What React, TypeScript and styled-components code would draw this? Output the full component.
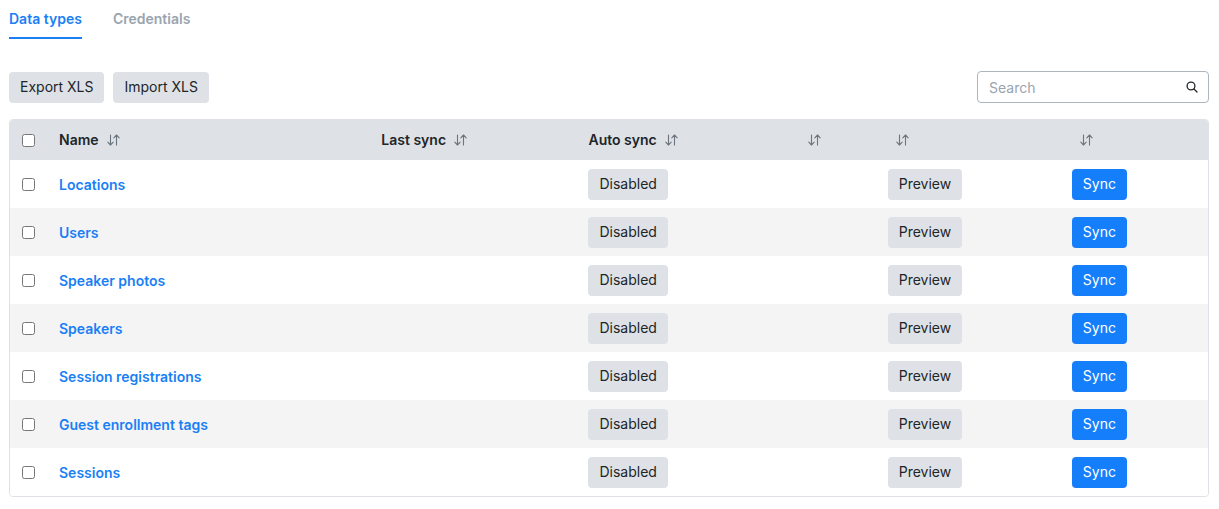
import React from "react";
import styled, { createGlobalStyle } from "styled-components";

const GlobalStyle = createGlobalStyle`
  body {
    margin: 0;
    background: #ffffff;
    font-family: Inter, "Liberation Sans", sans-serif;
    color: #212529;
  }
`;

const Page = styled.div`
  padding: 0 10px 0 9px;
`;

const Tabs = styled.nav`
  display: flex;
  gap: 31px;
  height: 39px;
`;

const Tab = styled.a<{ $active?: boolean }>`
  display: flex;
  align-items: center;
  height: 37px;
  font-size: 14px;
  font-weight: 600;
  color: ${(p) => (p.$active ? "#1a7ff5" : "#9aa4af")};
  border-bottom: 2px solid ${(p) => (p.$active ? "#1a7ff5" : "transparent")};
  cursor: pointer;
`;

const Toolbar = styled.div`
  display: flex;
  align-items: center;
  justify-content: space-between;
  height: 32px;
  margin-top: 32px;
  margin-bottom: 16px;
`;

const ButtonGroup = styled.div`
  display: flex;
  gap: 9px;
`;

const Btn = styled.button<{ $variant?: "light" | "primary" }>`
  font-family: inherit;
  font-size: 14px;
  line-height: 20px;
  padding: 5px 11px 6px;
  border: 0;
  border-radius: 4px;
  background: ${(p) => (p.$variant === "primary" ? "#157ffb" : "#dee2e6")};
  color: ${(p) => (p.$variant === "primary" ? "#ffffff" : "#212529")};
  cursor: pointer;
`;

const SearchBox = styled.label`
  display: flex;
  align-items: center;
  width: 232px;
  height: 32px;
  box-sizing: border-box;
  border: 1px solid #adb5bd;
  border-radius: 4px;
  padding: 0 10px 0 11px;
`;

const SearchInput = styled.input`
  flex: 1;
  min-width: 0;
  padding: 0;
  border: 0;
  outline: none;
  font-family: inherit;
  font-size: 14px;
  color: #212529;
  &::placeholder {
    color: #9aa4af;
  }
`;

const TableWrap = styled.div`
  border: 1px solid #dee2e6;
  border-radius: 4px;
  overflow: hidden;
`;

const Table = styled.table`
  width: 100%;
  border-collapse: collapse;
  table-layout: fixed;
`;

const Th = styled.th`
  height: 40px;
  padding: 0 12px;
  background: #dee2e6;
  text-align: left;
  font-size: 14px;
  line-height: 16px;
  font-weight: 600;
  color: #212529;
  white-space: nowrap;
`;

const Row = styled.tr<{ $striped?: boolean }>`
  height: 48px;
  background: ${(p) => (p.$striped ? "#f4f4f5" : "#ffffff")};
`;

const Td = styled.td`
  padding: 0 12px;
  font-size: 14px;
  vertical-align: middle;
`;

const Check = styled.input`
  width: 13px;
  height: 13px;
  margin: 0;
  display: block;
  accent-color: #1a7ff5;
`;

const NameLink = styled.a`
  color: #1a7ff5;
  font-weight: 600;
  text-decoration: none;
  cursor: pointer;
`;

const SortIcon = styled.svg`
  display: inline-block;
  vertical-align: -1px;
  margin-left: 8px;
`;

const Sort = () => (
  <SortIcon width="13" height="12" viewBox="0 0 13 12" fill="none" stroke="#6c757d" strokeWidth="1.1" strokeLinecap="round" strokeLinejoin="round">
    <path d="M3.5 1v10M0.8 8.2L3.5 11l2.7-2.8" />
    <path d="M9.5 11V1M6.8 3.8L9.5 1l2.7 2.8" />
  </SortIcon>
);

const SearchIcon = () => (
  <svg width="12" height="12" viewBox="0 0 12 12" fill="none" stroke="#212529" strokeWidth="1.3" strokeLinecap="round">
    <circle cx="5" cy="5" r="3.9" />
    <path d="M8 8l3 3" />
  </svg>
);

const rows = [
  "Locations",
  "Users",
  "Speaker photos",
  "Speakers",
  "Session registrations",
  "Guest enrollment tags",
  "Sessions",
];

const widths = [37, 322, 207, 211, 88, 184, 148];

export default function App() {
  return (
    <>
      <GlobalStyle />
      <Page>
        <Tabs>
          <Tab $active>Data types</Tab>
          <Tab>Credentials</Tab>
        </Tabs>
        <Toolbar>
          <ButtonGroup>
            <Btn>Export XLS</Btn>
            <Btn>Import XLS</Btn>
          </ButtonGroup>
          <SearchBox>
            <SearchInput placeholder="Search" />
            <SearchIcon />
          </SearchBox>
        </Toolbar>
        <TableWrap>
          <Table>
            <colgroup>
              {widths.map((w, i) => (
                <col key={i} style={{ width: w }} />
              ))}
            </colgroup>
            <thead>
              <tr>
                <Th>
                  <Check type="checkbox" />
                </Th>
                <Th>
                  Name
                  <Sort />
                </Th>
                <Th>
                  Last sync
                  <Sort />
                </Th>
                <Th>
                  Auto sync
                  <Sort />
                </Th>
                <Th>
                  <Sort />
                </Th>
                <Th>
                  <Sort />
                </Th>
                <Th>
                  <Sort />
                </Th>
              </tr>
            </thead>
            <tbody>
              {rows.map((name, i) => (
                <Row key={name} $striped={i % 2 === 1}>
                  <Td>
                    <Check type="checkbox" />
                  </Td>
                  <Td>
                    <NameLink>{name}</NameLink>
                  </Td>
                  <Td />
                  <Td>
                    <Btn>Disabled</Btn>
                  </Td>
                  <Td />
                  <Td>
                    <Btn>Preview</Btn>
                  </Td>
                  <Td>
                    <Btn $variant="primary">Sync</Btn>
                  </Td>
                </Row>
              ))}
            </tbody>
          </Table>
        </TableWrap>
      </Page>
    </>
  );
}
